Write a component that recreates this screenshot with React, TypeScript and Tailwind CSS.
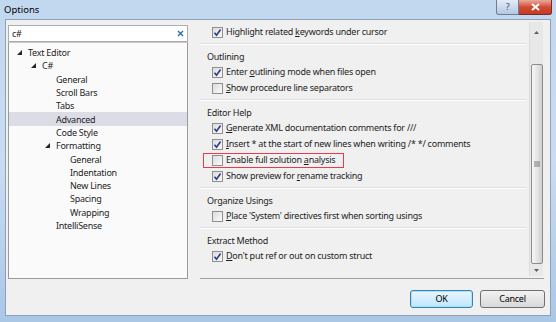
import React from 'react';

type Row =
  | { kind: 'check'; checked: boolean; label: React.ReactNode; flagged?: boolean }
  | { kind: 'header'; label: string }
  | { kind: 'sep' };

const treeItems: { label: string; indent: number; arrow?: boolean; selected?: boolean }[] = [
  { label: 'Text Editor', indent: 0, arrow: true },
  { label: 'C#', indent: 1, arrow: true },
  { label: 'General', indent: 2 },
  { label: 'Scroll Bars', indent: 2 },
  { label: 'Tabs', indent: 2 },
  { label: 'Advanced', indent: 2, selected: true },
  { label: 'Code Style', indent: 2 },
  { label: 'Formatting', indent: 2, arrow: true },
  { label: 'General', indent: 3 },
  { label: 'Indentation', indent: 3 },
  { label: 'New Lines', indent: 3 },
  { label: 'Spacing', indent: 3 },
  { label: 'Wrapping', indent: 3 },
  { label: 'IntelliSense', indent: 2 },
];

const rows: Row[] = [
  { kind: 'check', checked: true, label: <>Highlight related <u>k</u>eywords under cursor</> },
  { kind: 'sep' },
  { kind: 'header', label: 'Outlining' },
  { kind: 'check', checked: true, label: <>Enter <u>o</u>utlining mode when files open</> },
  { kind: 'check', checked: false, label: <><u>S</u>how procedure line separators</> },
  { kind: 'sep' },
  { kind: 'header', label: 'Editor Help' },
  { kind: 'check', checked: true, label: <><u>G</u>enerate XML documentation comments for ///</> },
  { kind: 'check', checked: true, label: <><u>I</u>nsert * at the start of new lines when writing /* */ comments</> },
  { kind: 'check', checked: false, flagged: true, label: <>Enable full solution <u>a</u>nalysis</> },
  { kind: 'check', checked: true, label: <>Show preview for <u>r</u>ename tracking</> },
  { kind: 'sep' },
  { kind: 'header', label: 'Organize Usings' },
  { kind: 'check', checked: false, label: <><u>P</u>lace 'System' directives first when sorting usings</> },
  { kind: 'sep' },
  { kind: 'header', label: 'Extract Method' },
  { kind: 'check', checked: true, label: <><u>D</u>on't put ref or out on custom struct</> },
];

const Checkbox = ({ checked }: { checked: boolean }) => (
  <span className="w-[11px] h-[11px] border border-[#8f8f8f] bg-gradient-to-br from-[#dcdcdc] to-[#fbfbfb] flex items-center justify-center shrink-0">
    {checked && (
      <svg width="9" height="9" viewBox="0 0 9 9">
        <path d="M1.5 4.8 L3.5 7.2 L7.6 1.5" stroke="#2b3b8a" strokeWidth="1.6" fill="none" />
      </svg>
    )}
  </span>
);

const Arrow = () => (
  <svg width="5" height="5" viewBox="0 0 5 5" className="shrink-0">
    <path d="M5 0 L5 5 L0 5 Z" fill="#262626" />
  </svg>
);

export default function App() {
  return (
    <div className="w-[556px] h-[322px] flex flex-col bg-gradient-to-b from-[#c2d8ef] via-[#c9dcf1] to-[#aac7e6] overflow-hidden text-[9px] tracking-[-0.25px] text-[#1e1e1e] [font-family:'Noto_Sans',sans-serif]">
      {/* title bar */}
      <div className="h-[19px] flex items-start justify-between shrink-0">
        <span className="pl-[4px] pt-[3px] text-[9.5px] tracking-normal text-black">Options</span>
        <div className="flex mr-[4px]">
          <div className="w-[23px] h-[15px] border border-[#6d7e96] border-t-0 rounded-bl-[3px] bg-gradient-to-b from-[#e3ecf7] to-[#b4c8e0] flex items-center justify-center text-[9px] text-[#3d4f68]">?</div>
          <div className="w-[33px] h-[15px] border border-[#7a2a24] border-t-0 border-l-0 rounded-br-[3px] bg-gradient-to-b from-[#e9a99c] via-[#d04b35] to-[#c43c22] flex items-center justify-center">
            <svg width="9" height="8" viewBox="0 0 9 8">
              <path d="M1 1 L8 7 M8 1 L1 7" stroke="white" strokeWidth="2" />
            </svg>
          </div>
        </div>
      </div>

      {/* client area */}
      <div className="flex-1 mx-[5px] mb-[6px] bg-[#f0f0f0] border border-[#8da2ba] flex flex-col">
        <div className="flex">
          {/* left column */}
          <div className="ml-[2px] mt-[5px] w-[180px] flex flex-col">
            <div className="h-[17px] bg-white border border-[#abadb3] flex items-center justify-between px-[3px]">
              <span>c#</span>
              <svg width="7" height="7" viewBox="0 0 7 7">
                <path d="M1 1 L6 6 M6 1 L1 6" stroke="#2a6bb5" strokeWidth="1.4" />
              </svg>
            </div>
            <div className="h-[237px] bg-[#fafafa] border border-[#9a9a9a] border-t-[#c8c8c8] pt-[3px]">
              {treeItems.map((t, i) => (
                <div
                  key={i}
                  className={`h-[13.3px] flex items-center leading-none ${t.selected ? 'bg-[#dcdce6]' : ''}`}
                >
                  <span className="flex items-center" style={{ paddingLeft: 8 + t.indent * 14 }}>
                    <span className="w-[11px] flex items-center">{t.arrow && <Arrow />}</span>
                    {t.label}
                  </span>
                </div>
              ))}
            </div>
          </div>

          {/* right column */}
          <div className="ml-[12px] w-[344px] h-[259px] border-b border-[#a0a0a0] flex">
            <div className="flex-1 pt-[4px] pr-[3px]">
              {rows.map((r, i) => {
                if (r.kind === 'sep')
                  return <div key={i} className="my-[3px] h-[2px] border-t border-[#dedede] border-b border-b-white" />;
                if (r.kind === 'header')
                  return (
                    <div key={i} className="h-[16px] flex items-center pl-[7px] pt-[1px]">
                      {r.label}
                    </div>
                  );
                return (
                  <div key={i} className="h-[16px] flex items-center pl-[3px]">
                    <div
                      className={`flex items-center gap-[3px] pl-[8px] pr-[8px] h-[15px] border ${r.flagged ? 'border-[#ea3a4c]' : 'border-transparent'}`}
                    >
                      <Checkbox checked={r.checked} />
                      <span className="whitespace-nowrap">{r.label}</span>
                    </div>
                  </div>
                );
              })}
            </div>
            {/* scrollbar */}
            <div className="w-[14px] mt-[2px] mb-[2px] mr-[1px] bg-[#e8e8e8] border-l border-[#dcdcdc] flex flex-col items-center">
              <div className="h-[42px] flex items-start pt-[9px] shrink-0">
                <svg width="5" height="3" viewBox="0 0 5 3"><path d="M0 3 L2.5 0 L5 3 Z" fill="#606060" /></svg>
              </div>
              <div className="w-[12px] flex-1 border border-[#8c8c8c] rounded-[2px] bg-gradient-to-r from-[#f7f7f7] via-[#e6e6e6] to-[#cfcfcf] flex items-center justify-center">
                <svg width="6" height="6" viewBox="0 0 6 6">
                  <path d="M0 1 H6 M0 3 H6 M0 5 H6" stroke="#6a6a6a" strokeWidth="0.9" />
                </svg>
              </div>
              <div className="h-[12px] flex items-center shrink-0">
                <svg width="5" height="3" viewBox="0 0 5 3"><path d="M0 0 L2.5 3 L5 0 Z" fill="#606060" /></svg>
              </div>
            </div>
          </div>
        </div>

        {/* buttons */}
        <div className="flex justify-end gap-[7px] mt-[11px] mr-[5px]">
          <button className="w-[63px] h-[18px] border border-[#3c7fb1] rounded-[3px] bg-gradient-to-b from-[#eaf6fd] to-[#bee6fd] text-[9px] text-black shadow-[inset_0_0_0_1px_#a7e2fb]">
            OK
          </button>
          <button className="w-[65px] h-[18px] border border-[#707070] rounded-[3px] bg-gradient-to-b from-[#f2f2f2] to-[#d9d9d9] text-[9px] text-black">
            Cancel
          </button>
        </div>
      </div>
    </div>
  );
}
